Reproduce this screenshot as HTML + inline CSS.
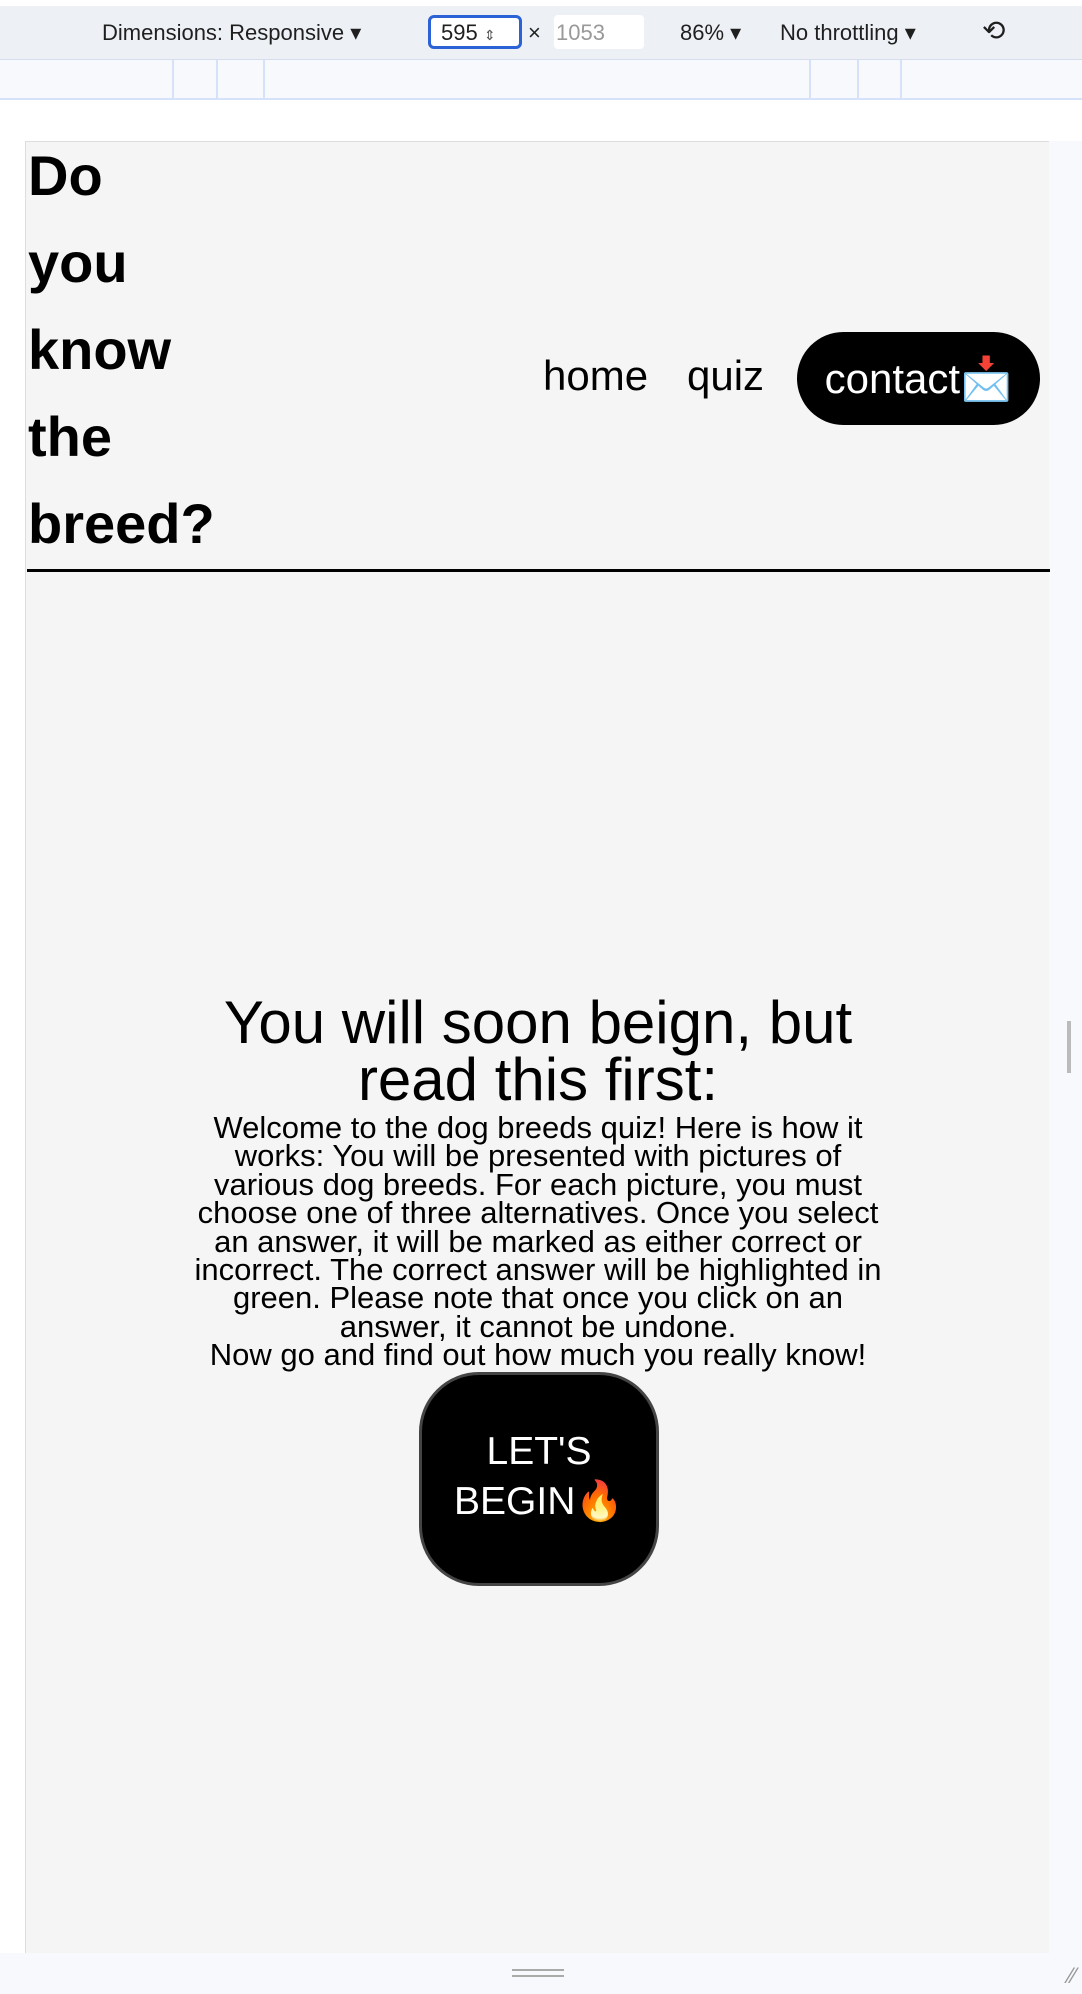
<!DOCTYPE html>
<html><head><meta charset="utf-8"><style>
*{margin:0;padding:0;box-sizing:border-box}
body{width:1082px;height:1994px;background:#fff;position:relative;overflow:hidden;font-family:"Liberation Sans",sans-serif}
.tb{position:absolute;left:0;top:6px;width:1082px;height:54px;background:#edf0f5;border-bottom:1px solid #d6deee;font-size:22px;color:#1f1f1f}
.tb span{position:absolute;top:14px}
.ruler{position:absolute;left:0;top:60px;width:1082px;height:40px;background:#f7f9fd;border-bottom:2px solid #d6e2fa}
.ruler i{position:absolute;top:0;width:2px;height:38px;background:#d6e2fa}
.frame{position:absolute;left:25px;top:141px;width:1024px;height:1812px;background:#f5f5f5;border-left:1px solid #ddd;border-top:1px solid #ddd}
.side{position:absolute;left:1049px;top:141px;width:33px;height:1812px;background:#f7f9fd}
.bottom{position:absolute;left:0;top:1953px;width:1082px;height:41px;background:#f7f9fd}
.t{position:absolute;left:2px;font-weight:bold;font-size:56px;line-height:1;color:#000;letter-spacing:0px}
.nav{position:absolute;font-size:42px;color:#000;top:210px}
.btn{position:absolute;left:771px;top:190px;width:243px;height:93px;border-radius:47px;background:#000;color:#fff;font-size:42px;line-height:93px;text-align:center}
.line{position:absolute;left:1px;top:427px;width:1023px;height:3px;background:#000}
h1{position:absolute;left:0;width:1024px;top:852px;text-align:center;font-weight:normal;font-size:60px;line-height:57px;color:#000}
p{position:absolute;left:0;width:1024px;top:972px;text-align:center;font-size:31px;line-height:28.4px;color:#000;white-space:nowrap}
.go{position:absolute;left:393px;top:1230px;width:240px;height:214px;border-radius:60px;background:#000;border:3px solid #444;color:#fff;font-size:39px;line-height:50px;text-align:center;padding-top:52px}
</style></head><body>
<div class="tb">
<span style="left:102px">Dimensions: Responsive ▾</span>
<span style="left:428px;top:9px;width:94px;height:34px;border:3px solid #2b62d6;border-radius:6px;background:#fff;padding:2px 0 0 10px">595 <small style="font-size:14px;color:#555">⇕</small></span>
<span style="left:528px">×</span>
<span style="left:554px;top:9px;width:90px;height:34px;background:#fff;border-radius:4px;padding:5px 0 0 2px;color:#999">1053</span>
<span style="left:680px">86% ▾</span>
<span style="left:780px">No throttling ▾</span>
<span style="left:982px;font-size:28px;top:8px">⟲</span>
</div>
<div class="ruler"><i style="left:172px"></i><i style="left:216px"></i><i style="left:263px"></i><i style="left:809px"></i><i style="left:857px"></i><i style="left:900px"></i></div>
<div class="side"><div style="position:absolute;left:18px;top:880px;width:4px;height:52px;border-left:2px solid #bbb;border-right:2px solid #bbb"></div></div>
<div class="bottom"><div style="position:absolute;left:512px;top:16px;width:52px;height:8px;border-top:2px solid #aaa;border-bottom:2px solid #aaa"></div><div style="position:absolute;right:6px;top:10px;color:#999;font-size:22px">⁄⁄</div></div>
<div class="frame">
<div class="t" style="top:6px">Do</div>
<div class="t" style="top:93px">you</div>
<div class="t" style="top:180px">know</div>
<div class="t" style="top:267px">the</div>
<div class="t" style="top:354px">breed?</div>
<div class="nav" style="left:517px">home</div>
<div class="nav" style="left:661px">quiz</div>
<div class="btn">contact📩</div>
<div class="line"></div>
<h1>You will soon beign, but<br>read this first:</h1>
<p>Welcome to the dog breeds quiz! Here is how it<br>works: You will be presented with pictures of<br>various dog breeds. For each picture, you must<br>choose one of three alternatives. Once you select<br>an answer, it will be marked as either correct or<br>incorrect. The correct answer will be highlighted in<br>green. Please note that once you click on an<br>answer, it cannot be undone.<br>Now go and find out how much you really know!</p>
<div class="go">LET'S<br>BEGIN🔥</div>
</div>
</body></html>
